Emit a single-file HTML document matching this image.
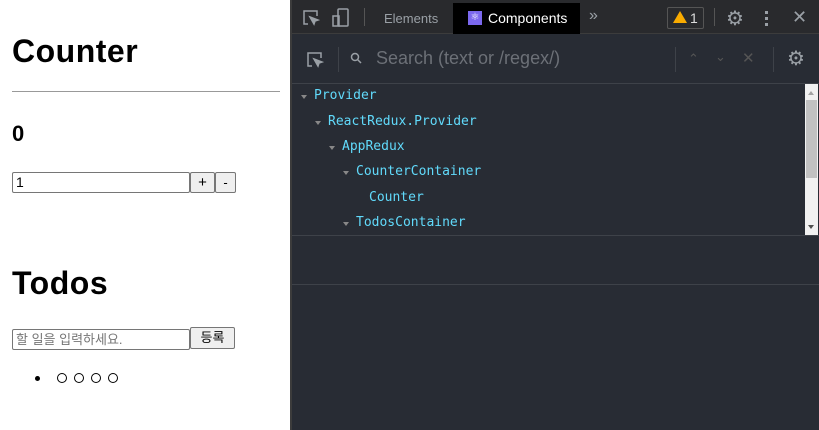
<!DOCTYPE html><html><head><style>
*{margin:0;padding:0;box-sizing:border-box}
body{width:819px;height:430px;overflow:hidden;background:#282c34;font-family:"Liberation Sans",sans-serif;position:relative}
.l{position:absolute;left:0;top:0;width:290px;height:430px;background:#fff;color:#000}
.a{position:absolute}
h1{font-size:32px;font-weight:bold;position:absolute;left:12px;letter-spacing:0.5px}
.inp{position:absolute;border:1px solid #767676;border-radius:2px;height:21px;font-size:14px;padding-left:3px;line-height:19px;background:#fff}
.btn{position:absolute;border:1px solid #767676;border-radius:2px;background:#efefef;height:21px;font-size:13px;text-align:center;line-height:19px}
.dv{position:absolute;left:290px;top:0;width:2px;height:430px;background:#3c3c3c}
.tab{position:absolute;left:292px;top:0;width:527px;height:34px;background:#292a2d;border-bottom:1px solid #3c3c3c}
.sb{position:absolute;left:292px;top:35px;width:527px;height:49px;background:#282c34;border-bottom:1px solid #3e4249}
.t{position:absolute;font-family:"DejaVu Sans Mono","Liberation Mono",monospace;font-size:13px;color:#61dafb;font-weight:normal}
.ar{position:absolute;width:0;height:0;border-left:3.5px solid transparent;border-right:3.5px solid transparent;border-top:4px solid #888}
.c{color:#9aa0a6;font-size:13px;position:absolute}
</style></head><body>
<div class="l">
<h1 style="top:33px">Counter</h1>
<div class="a" style="left:12px;top:91px;width:268px;height:1px;background:#999"></div>
<div class="a" style="left:12px;top:121px;font-size:22px;font-weight:bold">0</div>
<div class="inp" style="left:12px;top:172px;width:178px">1</div>
<div class="btn" style="left:190px;top:172px;width:25px;font-size:15px">+</div>
<div class="btn" style="left:215px;top:172px;width:21px">-</div>
<h1 style="top:265px">Todos</h1>
<div class="inp" style="left:12px;top:329px;width:178px;color:#757575;font-family:'Liberation Sans','Noto Sans CJK KR',sans-serif;font-size:13px">할 일을 입력하세요.</div>
<div class="btn" style="left:190px;top:327px;width:45px;height:22px;font-family:'Liberation Sans','Noto Sans CJK KR',sans-serif">등록</div>
<div class="a" style="left:35px;top:376px;width:5px;height:5px;border-radius:50%;background:#000"></div>
<div class="a" style="left:57px;top:373px;width:10px;height:10px;border:1.3px solid #000;border-radius:50%;box-shadow:none"></div>
<div class="a" style="left:74px;top:373px;width:10px;height:10px;border:1.3px solid #000;border-radius:50%"></div>
<div class="a" style="left:91px;top:373px;width:10px;height:10px;border:1.3px solid #000;border-radius:50%"></div>
<div class="a" style="left:108px;top:373px;width:10px;height:10px;border:1.3px solid #000;border-radius:50%"></div>
</div>
<div class="dv"></div>
<div class="tab">
<svg class="a" style="left:10px;top:9px" width="18" height="18" viewBox="0 0 18 18" fill="none" stroke="#9aa0a6" stroke-width="1.5"><path d="M6 15H2V2h13v5"/><path d="M8 8l8 3-3 1-1 3z" fill="#9aa0a6"/></svg>
<svg class="a" style="left:40px;top:8px" width="18" height="20" viewBox="0 0 18 20" fill="none" stroke="#9aa0a6" stroke-width="1.5"><rect x="6" y="1" width="10" height="17" rx="1"/><rect x="1" y="8" width="6" height="10"/></svg>
<div class="a" style="left:72px;top:8px;width:1px;height:18px;background:#555"></div>
<div class="c" style="left:92px;top:11px">Elements</div>
<div class="a" style="left:161px;top:3px;width:127px;height:31px;background:#000"></div>
<div class="a" style="left:176px;top:11px;width:14px;height:14px;background:#7b68ee;color:#fff;font-size:10px;text-align:center;line-height:14px">⚛</div>
<div class="a" style="left:196px;top:10px;color:#fff;font-size:14px">Components</div>
<div class="c" style="left:297px;top:7px;font-size:16px">»</div>
<div class="a" style="left:375px;top:7px;width:37px;height:22px;border:1px solid #555;border-radius:2px"></div>
<div class="a" style="left:381px;top:11px;width:0;height:0;border-left:7px solid transparent;border-right:7px solid transparent;border-bottom:12px solid #f9ab00"></div>
<div class="a" style="left:398px;top:10px;color:#ddd;font-size:14px">1</div>
<div class="a" style="left:422px;top:8px;width:1px;height:18px;background:#555"></div>
<div class="c" style="left:434px;top:6px;font-size:20px">⚙</div>
<div class="a" style="left:473px;top:11px;width:3px;height:3px;background:#9aa0a6;box-shadow:0 6px #9aa0a6,0 12px #9aa0a6"></div>
<div class="c" style="left:500px;top:7px;font-size:18px">✕</div>
</div>
<div class="sb">
<svg class="a" style="left:14px;top:16px" width="18" height="18" viewBox="0 0 18 18" fill="none" stroke="#9aa0a6" stroke-width="1.5"><path d="M6 15H2V2h13v5"/><path d="M8 8l8 3-3 1-1 3z" fill="#9aa0a6"/></svg>
<div class="a" style="left:46px;top:12px;width:1px;height:25px;background:#3e4249"></div>
<svg class="a" style="left:58px;top:17px" width="12" height="12" viewBox="0 0 12 12" fill="none" stroke="#9aa0a6" stroke-width="1.5"><circle cx="5" cy="5" r="3.5"/><path d="M7.5 7.5l3.5 3.5"/></svg>
<div class="a" style="left:84px;top:13px;color:#6c7077;font-size:18px">Search (text or /regex/)</div>
<div class="a" style="left:383px;top:12px;width:1px;height:25px;background:#3e4249"></div>
<div class="a" style="left:396px;top:16px;color:#555;font-size:13px">⌃</div>
<div class="a" style="left:423px;top:14px;color:#555;font-size:13px">⌄</div>
<div class="a" style="left:450px;top:14px;color:#555;font-size:15px">✕</div>
<div class="a" style="left:481px;top:12px;width:1px;height:25px;background:#3e4249"></div>
<div class="c" style="left:495px;top:11px;font-size:20px">⚙</div>
</div>
<div class="ar" style="left:301px;top:95px"></div><div class="t" style="left:314px;top:88px">Provider</div>
<div class="ar" style="left:315px;top:121px"></div><div class="t" style="left:328px;top:114px">ReactRedux.Provider</div>
<div class="ar" style="left:329px;top:146px"></div><div class="t" style="left:342px;top:139px">AppRedux</div>
<div class="ar" style="left:343px;top:171px"></div><div class="t" style="left:356px;top:164px">CounterContainer</div>
<div class="t" style="left:369px;top:190px">Counter</div>
<div class="ar" style="left:343px;top:222px"></div><div class="t" style="left:356px;top:215px">TodosContainer</div>
<div class="a" style="left:805px;top:84px;width:13px;height:151px;background:#f1f1f1"></div>
<div class="a" style="left:806px;top:100px;width:11px;height:78px;background:#c1c1c1"></div>
<div class="a" style="left:808px;top:91px;width:0;height:0;border-left:3.5px solid transparent;border-right:3.5px solid transparent;border-bottom:4px solid #a3a3a3"></div>
<div class="a" style="left:808px;top:225px;width:0;height:0;border-left:3.5px solid transparent;border-right:3.5px solid transparent;border-top:4px solid #505050"></div>
<div class="a" style="left:292px;top:235px;width:527px;height:1px;background:#3e4249"></div>
<div class="a" style="left:292px;top:284px;width:527px;height:1px;background:#3e4249"></div>
</body></html>
